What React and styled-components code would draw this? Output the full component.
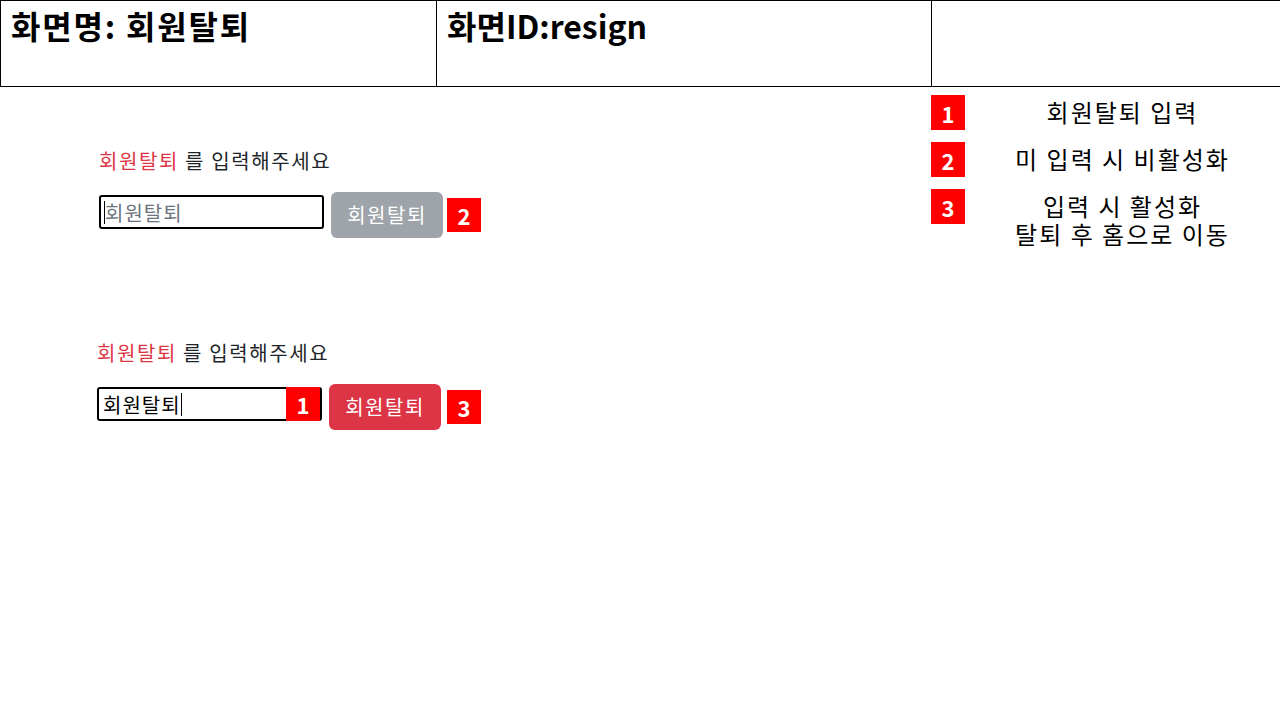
import React from 'react';
import styled, { createGlobalStyle } from 'styled-components';

const GlobalStyle = createGlobalStyle`
	html, body {
		margin: 0;
		padding: 0;
		background: #fff;
	}
	body {
		font-family: "Noto Sans CJK KR", "Noto Sans", sans-serif;
		color: #000;
	}
	* {
		box-sizing: border-box;
	}
`

const Page = styled.div`
	width: 1280px;
	height: 720px;
	overflow: hidden;
`

const Header = styled.div`
	display: grid;
	grid-template-columns: 436px 495px 1fr;
	height: 87px;
	border-top: 1px solid #000;
	border-bottom: 1px solid #000;
	border-left: 1px solid #000;
`

const HeaderCell = styled.div`
	padding: 0 0 0 10px;
	font-size: 32px;
	font-weight: 700;
	line-height: 48px;
	letter-spacing: ${({ $spacing }) => $spacing || 0}px;
	border-right: ${({ $last }) => ($last ? 'none' : '1px solid #000')};
`

const Body = styled.div`
	display: flex;
`

const Main = styled.div`
	width: 931px;
	padding-top: 59px;
`

const Section = styled.div`
	margin-left: ${({ $indent }) => $indent}px;
	margin-bottom: ${({ $after }) => $after || 0}px;
`

const Prompt = styled.div`
	font-size: 20px;
	line-height: 30px;
	letter-spacing: 1.6px;
	color: #212529;
	margin-bottom: 16px;
`

const Keyword = styled.span`
	color: #dc3545;
`

const Row = styled.div`
	display: flex;
	align-items: center;
	gap: 7px;
`

const InputWrap = styled.div`
	position: relative;
	margin-bottom: 6px;
`

const TextInput = styled.input`
	display: block;
	width: 225px;
	height: 34px;
	border: 2px solid #000;
	border-radius: 3px;
	padding: 0 4px;
	font-family: inherit;
	font-size: 20px;
	letter-spacing: 1px;
	color: #000;
	outline: none;
	background: #fff;

	&::placeholder {
		color: #6c757d;
	}
`

const Caret = styled.span`
	position: absolute;
	top: 6px;
	left: ${({ $at }) => $at}px;
	width: 1px;
	height: 23px;
	background: #000;
`

const Button = styled.button`
	width: 112px;
	height: 46px;
	padding: 8px 16px;
	border: none;
	border-radius: 6px;
	font-family: inherit;
	font-size: 20px;
	line-height: 30px;
	letter-spacing: 1.5px;
	color: #fff;
	background: ${({ disabled }) => (disabled ? '#6c757d' : '#dc3545')};
	opacity: ${({ disabled }) => (disabled ? 0.65 : 1)};
	cursor: ${({ disabled }) => (disabled ? 'default' : 'pointer')};
`

const Badge = styled.span`
	display: flex;
	align-items: center;
	justify-content: center;
	width: 34px;
	height: ${({ $tall }) => ($tall ? 35 : 34)}px;
	margin-left: ${({ $ml }) => $ml || 0}px;
	background: #ff0000;
	color: #fff;
	font-size: 22px;
	font-weight: 700;
	line-height: 1;
	flex-shrink: 0;
`

const OverBadge = styled(Badge)`
	position: absolute;
	top: 0;
	right: 2px;
`

const Legend = styled.aside`
	flex: 1;
	padding-top: 8px;
	display: flex;
	flex-direction: column;
	gap: 12px;
`

const LegendRow = styled.div`
	display: grid;
	grid-template-columns: 34px 1fr;
	align-items: start;
`

const LegendText = styled.div`
	padding-top: 3px;
	font-size: 24px;
	line-height: 28px;
	letter-spacing: 2px;
	text-align: center;
	color: #000;
`

const legend = [
	{ n: 1, lines: ['회원탈퇴 입력'] },
	{ n: 2, lines: ['미 입력 시 비활성화'] },
	{ n: 3, lines: ['입력 시 활성화', '탈퇴 후 홈으로 이동'] },
]

export default function App() {
	return (
		<Page>
			<GlobalStyle />
			<Header>
				<HeaderCell $spacing={1.8}>화면명: 회원탈퇴</HeaderCell>
				<HeaderCell>화면ID:resign</HeaderCell>
				<HeaderCell $last />
			</Header>
			<Body>
				<Main>
					<Section $indent={99} $after={100}>
						<Prompt>
							<Keyword>회원탈퇴</Keyword> 를 입력해주세요
						</Prompt>
						<Row>
							<InputWrap>
								<TextInput placeholder="회원탈퇴" readOnly />
								<Caret $at={5} />
							</InputWrap>
							<Button disabled>회원탈퇴</Button>
							<Badge $ml={-3}>2</Badge>
						</Row>
					</Section>
					<Section $indent={97}>
						<Prompt>
							<Keyword>회원탈퇴</Keyword> 를 입력해주세요
						</Prompt>
						<Row>
							<InputWrap>
								<TextInput value="회원탈퇴" readOnly />
								<Caret $at={84} />
								<OverBadge>1</OverBadge>
							</InputWrap>
							<Button>회원탈퇴</Button>
							<Badge $ml={-1}>3</Badge>
						</Row>
					</Section>
				</Main>
				<Legend>
					{legend.map((item) => (
						<LegendRow key={item.n}>
							<Badge $tall>{item.n}</Badge>
							<LegendText>
								{item.lines.map((l) => (
									<div key={l}>{l}</div>
								))}
							</LegendText>
						</LegendRow>
					))}
				</Legend>
			</Body>
		</Page>
	)
}
